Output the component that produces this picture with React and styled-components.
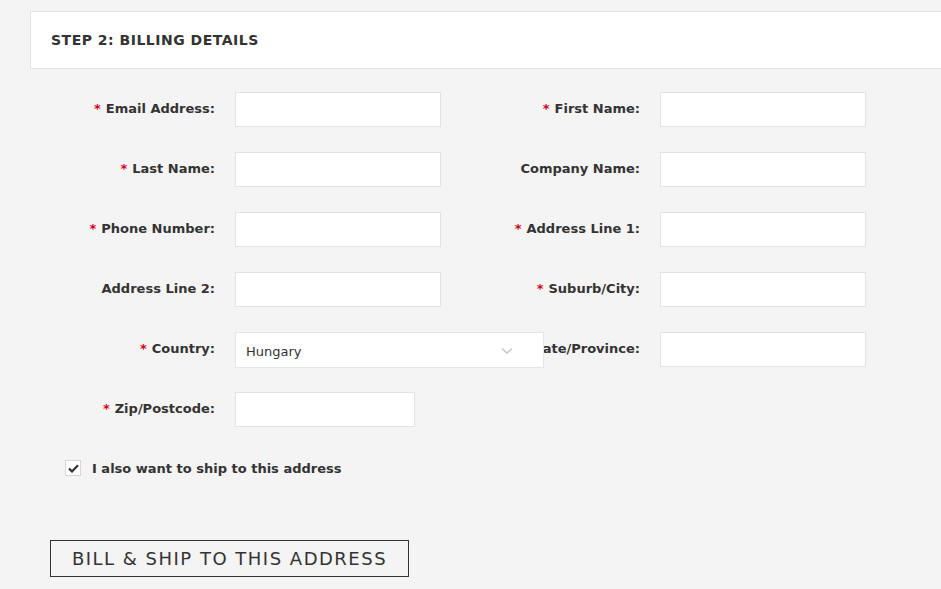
import React from 'react'
import styled, { createGlobalStyle } from 'styled-components'

const Global = createGlobalStyle`
    html, body {
        margin: 0;
        padding: 0;
        background: #f4f4f4;
        font-family: "DejaVu Sans", Verdana, sans-serif;
        color: #333;
        overflow: hidden;
    }
`;

const fields = [
    { label: 'Email Address', required: true },
    { label: 'First Name', required: true },
    { label: 'Last Name', required: true },
    { label: 'Company Name' },
    { label: 'Phone Number', required: true },
    { label: 'Address Line 1', required: true },
    { label: 'Address Line 2' },
    { label: 'Suburb/City', required: true },
    { label: 'Country', required: true, select: 'Hungary' },
    { label: 'State/Province', required: true },
    { label: 'Zip/Postcode', required: true, small: true },
]

function App() {
    return (
        <Page>
            <Global />
            <Header>
                <h2>STEP 2: BILLING DETAILS</h2>
            </Header>
            <FormGrid>
                {fields.map((f) => (
                    <Field key={f.label}>
                        <Label>
                            {f.required && <Star>*</Star>}
                            {f.label}:
                        </Label>
                        {f.select ? (
                            <Select>
                                <span>{f.select}</span>
                                <svg width="12" height="8" viewBox="0 0 12 8">
                                    <path d="M1 1.5 L6 6 L11 1.5" fill="none" stroke="#c4c4c4" strokeWidth="1.4" />
                                </svg>
                            </Select>
                        ) : (
                            <Input $small={f.small} />
                        )}
                    </Field>
                ))}
            </FormGrid>
            <CheckRow>
                <Box>
                    <svg width="11" height="9" viewBox="0 0 11 9">
                        <path d="M1 4.5 L4 7.5 L10 1.2" fill="none" stroke="#333" strokeWidth="2.2" />
                    </svg>
                </Box>
                I also want to ship to this address
            </CheckRow>
            <Button>BILL &amp; SHIP TO THIS ADDRESS</Button>
        </Page>
    )
}

const Page = styled.div`
    padding: 11px 0 0 30px;
    width: 941px;
    height: 589px;
    box-sizing: border-box;
`;

const Header = styled.div`
    background: #fff;
    border: 1px solid #e2e2e2;
    border-right: none;
    height: 56px;
    display: flex;
    align-items: center;
    padding-left: 20px;
    margin-right: -10px;
    h2 {
        margin: 0;
        font-size: 14px;
        font-weight: bold;
        letter-spacing: 0.5px;
        color: #333;
    }
`;

const FormGrid = styled.div`
    margin-top: 23px;
    display: grid;
    grid-template-columns: 411px 411px;
    column-gap: 14px;
    row-gap: 25px;
`;

const Field = styled.div`
    display: grid;
    grid-template-columns: 185px 206px;
    column-gap: 20px;
    align-items: center;
    height: 35px;
`;

const Label = styled.label`
    text-align: right;
    font-size: 13px;
    font-weight: bold;
    color: #333;
    white-space: nowrap;
    padding-bottom: 3px;
`;

const Star = styled.span`
    color: #d0021b;
    margin-right: 5px;
`;

const Input = styled.div`
    width: ${(p) => (p.$small ? '178px' : '204px')};
    height: 33px;
    background: #fff;
    border: 1px solid #e3e3e3;
`;

const Select = styled.div`
    position: relative;
    z-index: 1;
    box-sizing: border-box;
    width: 309px;
    height: 36px;
    background: #fff;
    border: 1px solid #e6e6e6;
    display: flex;
    align-items: center;
    justify-content: space-between;
    padding: 2px 30px 0 10px;
    font-size: 13px;
    color: #333;
`;

const CheckRow = styled.div`
    margin: 33px 0 0 35px;
    display: flex;
    align-items: center;
    gap: 11px;
    font-size: 13px;
    font-weight: bold;
    color: #333;
`;

const Box = styled.span`
    width: 14px;
    height: 14px;
    border: 1px solid #d6d6d6;
    background: #fff;
    display: flex;
    align-items: center;
    justify-content: center;
`;

const Button = styled.button`
    margin: 64px 0 0 20px;
    width: 359px;
    height: 37px;
    background: transparent;
    border: 1px solid #333;
    font-family: "DejaVu Sans", Verdana, sans-serif;
    font-size: 18px;
    letter-spacing: 1.5px;
    color: #333;
    padding: 0;
    display: block;
`;

export default App
